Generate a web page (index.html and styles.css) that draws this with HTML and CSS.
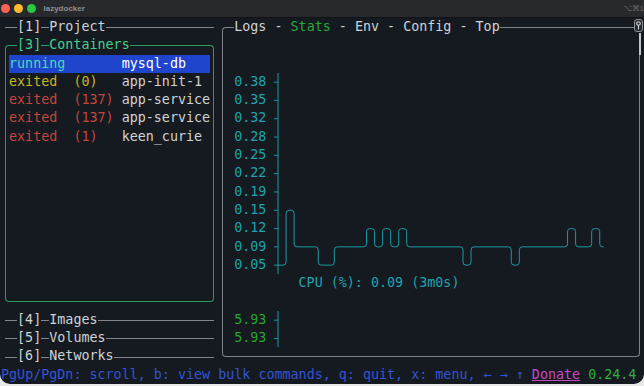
FILE: index.html
```html
<!DOCTYPE html>
<html>

<head>
    <meta charset="utf-8">
    <link rel="stylesheet" href="styles.css">
</head>

<body>
    <div class="window">
        <div class="titlebar">
            <span class="light red"></span>
            <span class="light yellow"></span>
            <span class="light green"></span>
            <span class="title">lazydocker</span>
            <span class="shortcut">⌥⌘1</span>
        </div>

        <div class="term">
            <div class="bar project">
                <span class="line lead"></span><span class="label">[1]</span><span class="line seg"></span><span class="label">Project</span><span class="line rule"></span>
            </div>

            <div class="panel containers">
                <div class="panel-head">
                    <span class="corner-tl"></span><span class="label">[3]</span><span class="line seg"></span><span class="label">Containers</span><span class="line rule"></span><span class="corner-tr"></span>
                </div>
                <div class="panel-body">
                    <div class="row selected"><span class="running">running</span>       <span class="name">mysql-db</span></div>
                    <div class="row"><span class="warn">exited  (0)</span>   app-init-1</div>
                    <div class="row"><span class="bad">exited  (137)</span> app-service</div>
                    <div class="row"><span class="bad">exited  (137)</span> app-service</div>
                    <div class="row"><span class="bad">exited  (1)</span>   keen_curie</div>
                </div>
            </div>

            <div class="bar images">
                <span class="line lead"></span><span class="label">[4]</span><span class="line seg"></span><span class="label">Images</span><span class="line rule"></span>
            </div>
            <div class="bar volumes">
                <span class="line lead"></span><span class="label">[5]</span><span class="line seg"></span><span class="label">Volumes</span><span class="line rule"></span>
            </div>
            <div class="bar networks">
                <span class="line lead"></span><span class="label">[6]</span><span class="line seg"></span><span class="label">Networks</span><span class="line rule"></span>
            </div>

            <div class="panel main">
                <div class="panel-head">
                    <span class="corner-tl"></span><span class="tabs">Logs - <span class="active">Stats</span> - Env - Config - Top</span><span class="line rule"></span>
                    <span class="grip">
                        <svg width="7" height="11" viewBox="0 0 7 11">
                            <circle cx="3.5" cy="3.5" r="1.8" fill="none" stroke="#d4d6d9" stroke-width="1.1"/>
                            <path d="M3.5 5.3 V9.5" stroke="#d4d6d9" stroke-width="1.1"/>
                        </svg>
                    </span>
                </div>
                <div class="panel-body stats">
                    <div class="chart cpu">
                        <div class="labels">
                            <div>0.38</div>
                            <div>0.35</div>
                            <div>0.32</div>
                            <div>0.28</div>
                            <div>0.25</div>
                            <div>0.22</div>
                            <div>0.19</div>
                            <div>0.15</div>
                            <div>0.12</div>
                            <div>0.09</div>
                            <div>0.05</div>
                        </div>
                        <svg class="plot" viewBox="0 0 362.25 201.3" preserveAspectRatio="none">
                            <path class="axis" d="M4.025,0 V201.3 M0,9.15 H4.025 M0,27.45 H4.025 M0,45.75 H4.025 M0,64.05 H4.025 M0,82.35 H4.025 M0,100.65 H4.025 M0,118.95 H4.025 M0,137.25 H4.025 M0,155.55 H4.025 M0,173.85 H4.025"/>
                            <path class="series" d="M0,192.15 H9.075 Q12.075,192.15 12.075,189.15 V140.25 Q12.075,137.25 15.075,137.25 H17.125 Q20.125,137.25 20.125,140.25 V170.85 Q20.125,173.85 23.125,173.85 H41.275 Q44.275,173.85 44.275,176.85 V189.15 Q44.275,192.15 47.275,192.15 H57.375 Q60.375,192.15 60.375,189.15 V176.85 Q60.375,173.85 63.375,173.85 H89.575 Q92.575,173.85 92.575,170.85 V158.55 Q92.575,155.55 95.575,155.55 H97.625 Q100.625,155.55 100.625,158.55 V170.85 Q100.625,173.85 103.625,173.85 H105.675 Q108.675,173.85 108.675,170.85 V158.55 Q108.675,155.55 111.675,155.55 H113.725 Q116.725,155.55 116.725,158.55 V170.85 Q116.725,173.85 119.725,173.85 H121.775 Q124.775,173.85 124.775,170.85 V158.55 Q124.775,155.55 127.775,155.55 H129.825 Q132.825,155.55 132.825,158.55 V170.85 Q132.825,173.85 135.825,173.85 H186.175 Q189.175,173.85 189.175,176.85 V189.15 Q189.175,192.15 192.175,192.15 H194.225 Q197.225,192.15 197.225,189.15 V176.85 Q197.225,173.85 200.225,173.85 H234.475 Q237.475,173.85 237.475,176.85 V189.15 Q237.475,192.15 240.475,192.15 H242.525 Q245.525,192.15 245.525,189.15 V176.85 Q245.525,173.85 248.525,173.85 H290.825 Q293.825,173.85 293.825,170.85 V158.55 Q293.825,155.55 296.825,155.55 H298.875 Q301.875,155.55 301.875,158.55 V170.85 Q301.875,173.85 304.875,173.85 H314.975 Q317.975,173.85 317.975,170.85 V158.55 Q317.975,155.55 320.975,155.55 H323.025 Q326.025,155.55 326.025,158.55 V170.85 Q326.025,173.85 329.025,173.85 H330.05"/>
                        </svg>
                    </div>

                    <div class="legend">CPU (%): 0.09 (3m0s)</div>

                    <div class="chart mem">
                        <div class="labels">
                            <div>5.93</div>
                            <div>5.93</div>
                        </div>
                        <svg class="plot" viewBox="0 0 8.05 36.6" preserveAspectRatio="none">
                            <path class="axis" d="M4.025,0 V36.6 M0,9.15 H4.025 M0,27.45 H4.025"/>
                        </svg>
                    </div>
                </div>
                <span class="thumb"></span>
            </div>

            <div class="status">PgUp/PgDn: scroll, b: view bulk commands, q: quit, x: menu, ← → ↑ <span class="donate">Donate</span> <span class="version">0.24.4</span></div>
        </div>
    </div>
</body>

</html>
```

FILE: styles.css
```css
* {
    box-sizing: border-box;
}

body {
    margin: 0;
    background: #e9e9ea;
}

.window {
    width: 644px;
    height: 384px;
    background: #151a21;
    border-radius: 0 0 10px 10px;
    overflow: hidden;
    font-family: "DejaVu Sans Mono", monospace;
    font-size: 13.37px;
    color: #cdd0d4;
}

/* mac title bar */
.titlebar {
    height: 18px;
    display: flex;
    align-items: center;
    background: #28292c;
    border-bottom: 1px solid #101216;
    font-family: "Liberation Sans", sans-serif;
    font-size: 8px;
    font-weight: bold;
}

.light {
    width: 9px;
    height: 9px;
    border-radius: 50%;
    margin-right: 4px;
}

.light.red {
    background: #fe5f57;
    margin-left: 0.5px;
}

.light.yellow {
    background: #febc2e;
}

.light.green {
    background: #28c840;
}

.title {
    margin-left: 4px;
    color: #8e8f92;
}

.shortcut {
    margin-left: auto;
    color: #66676a;
    font-weight: normal;
}

/* terminal grid: 80 cols x 20 rows */
.term {
    display: grid;
    grid-template-columns: 27ch 53ch;
    grid-template-rows: repeat(20, 18.3px);
    padding-left: 1px;
    line-height: 18.3px;
}

.label,
.tabs,
.row,
.status,
.legend {
    white-space: pre;
}

.label {
    color: #cfd2d6;
}

.line {
    align-self: flex-end;
    height: 9.15px;
    border-top: 1px solid;
}

.seg {
    width: 1ch;
}

.rule {
    flex: 1;
}

.lead {
    width: 1.5ch;
    margin-left: 0.5ch;
}

.bar {
    display: flex;
    color: #83868c;
    grid-column: 1;
}

.bar .rule {
    margin-right: 0.5ch;
}

.project {
    grid-row: 1;
}

.images {
    grid-row: 17;
}

.volumes {
    grid-row: 18;
}

.networks {
    grid-row: 19;
}

/* framed panels */
.panel {
    display: flex;
    flex-direction: column;
}

.panel-head {
    display: flex;
    height: 18.3px;
    flex: none;
}

.corner-tl {
    align-self: flex-end;
    width: 1.5ch;
    height: 9.15px;
    margin-left: 0.5ch;
    border-top: 1px solid;
    border-left: 1px solid;
    border-top-left-radius: 4px;
}

.corner-tr {
    align-self: flex-end;
    width: 0.5ch;
    height: 9.15px;
    margin-right: 0.5ch;
    border-top: 1px solid;
    border-right: 1px solid;
    border-top-right-radius: 4px;
}

.panel-body {
    flex: 1;
    margin: 0 0.5ch 9.15px;
    border: 1px solid;
    border-top: none;
    border-radius: 0 0 4px 4px;
    padding-left: calc(0.5ch - 1px);
}

.containers {
    grid-column: 1;
    grid-row: 2 / 17;
    color: #2c9a60;
}

.containers .label {
    color: #43d18d;
}

.row {
    height: 18.3px;
    color: #d0d2d5;
}

.row.selected {
    width: 25ch;
    background: #1f45cc;
}

.running {
    color: #45dcb6;
}

.name {
    color: #ffffff;
}

.warn {
    color: #c6b620;
}

.bad {
    color: #c4463a;
}

/* stats panel */
.main {
    grid-column: 2;
    grid-row: 1 / 20;
    color: #7e8187;
    position: relative;
}

.tabs {
    color: #cfd2d6;
}

.tabs .active {
    color: #2aa83c;
}

.grip {
    display: flex;
    align-items: center;
    justify-content: center;
    width: 9px;
    height: 13px;
    margin: 1px 1px 0 0;
    border: 1px solid #8f9297;
    border-radius: 3px;
    background: #25282e;
}

.thumb {
    position: absolute;
    top: 15px;
    right: 3px;
    width: 2px;
    height: 22px;
    background: #c3c5c9;
}

.stats {
    padding-top: 36.6px;
}

.chart {
    display: grid;
    grid-template-columns: 6ch 45ch;
}

.labels div {
    height: 18.3px;
    padding-left: 1ch;
    color: #1fa3ac;
}

.plot {
    width: 100%;
    height: 100%;
    fill: none;
    stroke: #1b9aa3;
    stroke-width: 1;
}

.plot path {
    vector-effect: non-scaling-stroke;
}

.cpu {
    height: 201.3px;
}

.mem {
    height: 36.6px;
    grid-template-columns: 6ch 1ch;
}

.mem .labels div {
    color: #2aa32f;
}

.legend {
    height: 18.3px;
    margin-bottom: 18.3px;
    padding-left: 9ch;
    color: #1fa3ac;
}

/* key hints */
.status {
    grid-column: 1 / -1;
    grid-row: 20;
    color: #3453d2;
}

.donate {
    color: #c74ac4;
    text-decoration: underline;
}

.version {
    color: #2fae3a;
}
```
